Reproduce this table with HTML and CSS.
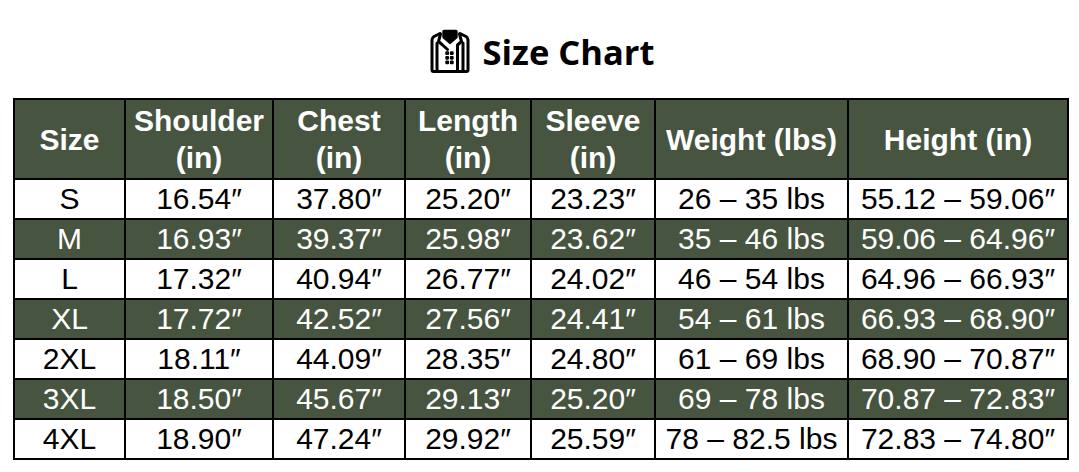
FILE: index.html
```html
<!DOCTYPE html>
<html lang="en">
<head>
<meta charset="utf-8">
<title>Size Chart</title>
<link rel="stylesheet" href="styles.css">
</head>
<body>
<div class="title">
  <svg class="icon" viewBox="0 0 48 48" width="48" height="48" aria-hidden="true">
    <path class="line" d="M15 5.5 L9 8.5 Q7 9.8 7 12 L7 42 Q7 43.5 8.5 43.5 L41.5 43.5 Q43 43.5 43 42 L43 12 Q43 9.8 41 8.5 L35 5.5"/>
    <path class="line" d="M12 15 L12 43.5 M38 15 L38 43.5"/>
    <path class="fill" d="M19 2.5 L31 2.5 Q32 2.5 32 3.5 L32 9.5 L25 15.5 L18 9.5 L18 3.5 Q18 2.5 19 2.5 Z"/>
    <path class="line" d="M15.5 6 L13.5 13.5 L17 16.5 L22.5 21.5"/>
    <path class="line" d="M34.5 6 L36.5 13.5 L32.5 17 L32.5 43.5"/>
    <g class="fill">
      <rect x="21" y="24" width="2.4" height="2.4" rx="0.4"/>
      <rect x="25.6" y="24" width="2.4" height="2.4" rx="0.4"/>
      <rect x="21" y="28.6" width="2.4" height="2.4" rx="0.4"/>
      <rect x="25.6" y="28.6" width="2.4" height="2.4" rx="0.4"/>
      <rect x="21" y="33.2" width="2.4" height="2.4" rx="0.4"/>
      <rect x="25.6" y="33.2" width="2.4" height="2.4" rx="0.4"/>
    </g>
  </svg>
  <h1 class="heading">Size Chart</h1>
</div>
<table class="chart">
  <colgroup>
    <col class="c-size"><col class="c-shoulder"><col class="c-chest"><col class="c-length"><col class="c-sleeve"><col class="c-weight"><col class="c-height">
  </colgroup>
  <thead>
    <tr>
      <th>Size</th><th>Shoulder<br>(in)</th><th>Chest<br>(in)</th><th>Length<br>(in)</th><th>Sleeve<br>(in)</th><th>Weight (lbs)</th><th>Height (in)</th>
    </tr>
  </thead>
  <tbody>
    <tr class="light"><td>S</td><td>16.54″</td><td>37.80″</td><td>25.20″</td><td>23.23″</td><td>26 – 35 lbs</td><td>55.12 – 59.06″</td></tr>
    <tr class="dark"><td>M</td><td>16.93″</td><td>39.37″</td><td>25.98″</td><td>23.62″</td><td>35 – 46 lbs</td><td>59.06 – 64.96″</td></tr>
    <tr class="light"><td>L</td><td>17.32″</td><td>40.94″</td><td>26.77″</td><td>24.02″</td><td>46 – 54 lbs</td><td>64.96 – 66.93″</td></tr>
    <tr class="dark"><td>XL</td><td>17.72″</td><td>42.52″</td><td>27.56″</td><td>24.41″</td><td>54 – 61 lbs</td><td>66.93 – 68.90″</td></tr>
    <tr class="light"><td>2XL</td><td>18.11″</td><td>44.09″</td><td>28.35″</td><td>24.80″</td><td>61 – 69 lbs</td><td>68.90 – 70.87″</td></tr>
    <tr class="dark"><td>3XL</td><td>18.50″</td><td>45.67″</td><td>29.13″</td><td>25.20″</td><td>69 – 78 lbs</td><td>70.87 – 72.83″</td></tr>
    <tr class="light"><td>4XL</td><td>18.90″</td><td>47.24″</td><td>29.92″</td><td>25.59″</td><td>78 – 82.5 lbs</td><td>72.83 – 74.80″</td></tr>
  </tbody>
</table>
</body>
</html>
```
FILE: styles.css
```css
html, body {
  margin: 0;
  padding: 0;
  background: #ffffff;
}
body {
  font-family: "Liberation Sans", Arial, sans-serif;
  color: #000;
}
.title {
  display: flex;
  justify-content: center;
  align-items: center;
  gap: 10px;
  height: 60px;
  margin: 22px 0 16px;
  padding-left: 0;
}
.icon {
  flex: none;
}
.icon .line {
  fill: none;
  stroke: #000;
  stroke-width: 3;
  stroke-linejoin: round;
  stroke-linecap: round;
}
.icon .fill {
  fill: #000;
  stroke: #000;
  stroke-width: 1.4;
  stroke-linejoin: round;
}
.heading {
  margin: 0;
  font-family: "Open Sans", "Noto Sans", sans-serif;
  font-weight: 700;
  font-size: 34.5px;
  line-height: 1;
  color: #000;
}
.chart {
  border-collapse: collapse;
  table-layout: fixed;
  width: 1054px;
  margin-left: 13px;
  font-size: 30px;
}
.c-size { width: 111px; }
.c-shoulder { width: 148px; }
.c-chest { width: 132px; }
.c-length { width: 126px; }
.c-sleeve { width: 124px; }
.c-weight { width: 193px; }
.c-height { width: 220px; }
.chart th,
.chart td {
  border: 2px solid #000;
  padding: 0;
  text-align: center;
  white-space: nowrap;
}
.chart th {
  background: #465440;
  color: #fff;
  font-weight: 700;
  line-height: 37px;
  height: 78px;
}
.chart td {
  height: 38px;
  line-height: 38px;
}
.chart .dark td {
  background: #465440;
  color: #fff;
}
.chart .light td {
  background: #fff;
  color: #000;
}
```
